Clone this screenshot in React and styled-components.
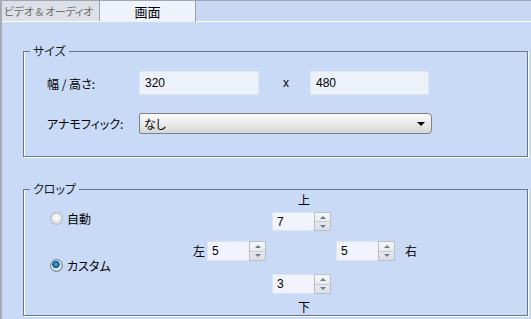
import React from 'react';
import styled, { createGlobalStyle } from 'styled-components';

const GlobalStyle = createGlobalStyle`
  html, body {
    margin: 0;
    padding: 0;
    background: #c9daf6;
  }
  body {
    font-family: "Noto Sans CJK JP", "Liberation Sans", sans-serif;
    font-size: 12px;
    font-feature-settings: "palt";
    color: #000;
  }
`;

const Window = styled.div`
  width: 529px;
  height: 319px;
  overflow: hidden;
  background: #c9daf6;
  border-left: 2px solid #a4abb7;
`;

const TabBar = styled.div`
  display: flex;
  height: 20px;
  border-top: 1px solid #9fa6b3;
  border-bottom: 1px solid #ffffff;
  background: #c8d8f2;
`;

const Tab = styled.div`
  display: flex;
  align-items: center;
  justify-content: ${(p) => (p.active ? 'center' : 'flex-start')};
  width: ${(p) => p.w}px;
  padding-left: ${(p) => (p.active ? 0 : 2)}px;
  box-sizing: border-box;
  height: ${(p) => (p.active ? 21 : 20)}px;
  background: ${(p) => (p.active ? '#eef2fb' : '#dde0e7')};
  color: ${(p) => (p.active ? '#000' : '#6e6e6e')};
  border-right: 1px solid #9aa2ae;
  font-size: ${(p) => (p.active ? 13 : 11)}px;
  letter-spacing: ${(p) => (p.active ? 0 : -0.3)}px;
  white-space: nowrap;
`;

const Content = styled.div`
  padding: 29px 0 0 21px;
`;

const Group = styled.div`
  position: relative;
  box-sizing: border-box;
  width: 505px;
  height: ${(p) => p.h}px;
  margin-top: ${(p) => p.mt || 0}px;
  border: 1px solid #6d7688;
  box-shadow: inset 1px 0 0 #ffffff, 1px 1px 0 #ffffff;
`;

const Legend = styled.span`
  position: absolute;
  top: -9px;
  left: 6px;
  padding: 0 3px;
  line-height: 16px;
  background: #c9daf6;
  color: #1a1a1a;
`;

const SizeBody = styled.div`
  display: flex;
  flex-direction: column;
  gap: 18px;
  padding: 19px 0 0 23px;
`;

const Row = styled.div`
  display: flex;
  align-items: center;
  height: ${(p) => p.h}px;
`;

const Label = styled.span`
  width: 92px;
`;

const TextBox = styled.div`
  box-sizing: border-box;
  width: ${(p) => p.w}px;
  height: 24px;
  display: flex;
  align-items: center;
  padding-left: 5px;
  background: #edf1fa;
  border: 1px solid #dfe5f0;
  font-family: "Liberation Sans", sans-serif;
  font-size: 12px;
`;

const Times = styled.span`
  width: 51px;
  text-align: center;
  font-family: "Liberation Sans", sans-serif;
  font-size: 12px;
  padding-left: 3px;
  box-sizing: border-box;
`;

const Select = styled.div`
  box-sizing: border-box;
  width: 293px;
  height: 21px;
  display: flex;
  align-items: center;
  justify-content: space-between;
  padding: 0 6px 0 4px;
  border: 1px solid #7b818b;
  border-radius: 2px 4px 4px 2px;
  background: linear-gradient(#fbfbfb, #e9e9e9 55%, #d6d6d6);
`;

const Arrow = styled.span`
  width: 0;
  height: 0;
  border-left: 4px solid transparent;
  border-right: 4px solid transparent;
  border-top: 4px solid #000;
  margin-top: 1px;
`;

const CropBody = styled.div`
  display: flex;
`;

const RadioCol = styled.div`
  width: 169px;
  box-sizing: border-box;
  padding: 20px 0 0 26px;
  display: flex;
  flex-direction: column;
  gap: 31px;
`;

const RadioRow = styled.label`
  display: flex;
  align-items: center;
  gap: 4px;
  height: 16px;
  font-size: 12px;
`;

const Radio = styled.span`
  width: 11px;
  height: 11px;
  border-radius: 50%;
  border: 1px solid ${(p) => (p.checked ? '#6b7d92' : '#b4b8be')};
  background: ${(p) =>
    p.checked
      ? 'radial-gradient(circle at 45% 40%, #6ab8e8 0, #1679b4 2px, #0d4f80 3.5px, #e8ecf2 4px, #c9ced6 6px)'
      : 'radial-gradient(circle at 50% 45%, #ffffff 0, #efefef 3px, #d2d4d8 6px)'};
`;

const CropGrid = styled.div`
  display: grid;
  grid-template-columns: 14px 65px 64px 69px 20px;
  grid-template-rows: 20px 23px 36px 30px 16px;
  align-items: center;
`;

const Side = styled.span`
  grid-row: ${(p) => p.row};
  grid-column: ${(p) => p.col};
  justify-self: ${(p) => p.justify || 'start'};
  font-size: 12px;
  line-height: 14px;
`;

const Spin = styled.div`
  grid-row: ${(p) => p.row};
  grid-column: ${(p) => p.col};
  box-sizing: border-box;
  width: 59px;
  height: ${(p) => p.h || 20}px;
  display: flex;
  background: #f0f3fb;
  border: 1px solid #dde3ee;
`;

const SpinValue = styled.span`
  flex: 1;
  display: flex;
  align-items: center;
  padding-left: 4px;
  font-family: "Liberation Sans", sans-serif;
  font-size: 12px;
`;

const SpinButtons = styled.div`
  width: 15px;
  display: flex;
  flex-direction: column;
  border: 1px solid #b9bfca;
  margin: -1px -1px -1px 0;
  background: linear-gradient(#f6f6f6, #dcdee2);
`;

const SpinHalf = styled.span`
  flex: 1;
  display: flex;
  align-items: center;
  justify-content: center;
  border-top: ${(p) => (p.down ? '1px solid #c6cbd4' : 'none')};
  &::after {
    content: '';
    border-left: 3px solid transparent;
    border-right: 3px solid transparent;
    ${(p) => (p.down ? 'border-top' : 'border-bottom')}: 3px solid #6c7a95;
  }
`;

const Spinner = ({ value, row, col, h }) => (
  <Spin row={row} col={col} h={h}>
    <SpinValue>{value}</SpinValue>
    <SpinButtons>
      <SpinHalf />
      <SpinHalf down />
    </SpinButtons>
  </Spin>
);

const App = () => (
  <Window>
    <GlobalStyle />
    <TabBar>
      <Tab w={98}>ビデオ &amp; オーディオ</Tab>
      <Tab w={96} active>
        画面
      </Tab>
    </TabBar>
    <Content>
      <Group h={106}>
        <Legend>サイズ</Legend>
        <SizeBody>
          <Row h={24}>
            <Label>幅 / 高さ:</Label>
            <TextBox w={120}>320</TextBox>
            <Times>x</Times>
            <TextBox w={119}>480</TextBox>
          </Row>
          <Row h={21}>
            <Label>アナモフィック:</Label>
            <Select>
              <span>なし</span>
              <Arrow />
            </Select>
          </Row>
        </SizeBody>
      </Group>
      <Group h={127} mt={32}>
        <Legend>クロップ</Legend>
        <CropBody>
          <RadioCol>
            <RadioRow>
              <Radio />
              自動
            </RadioRow>
            <RadioRow>
              <Radio checked />
              カスタム
            </RadioRow>
          </RadioCol>
          <CropGrid>
            <Side row={1} col={3} justify="center">上</Side>
            <Spinner value="7" row={2} col={3} h={19} />
            <Side row={3} col={1}>左</Side>
            <Spinner value="5" row={3} col={2} />
            <Spinner value="5" row={3} col={4} />
            <Side row={3} col={5}>右</Side>
            <Spinner value="3" row={4} col={3} />
            <Side row={5} col={3} justify="center">下</Side>
          </CropGrid>
        </CropBody>
      </Group>
    </Content>
  </Window>
);

export default App;
